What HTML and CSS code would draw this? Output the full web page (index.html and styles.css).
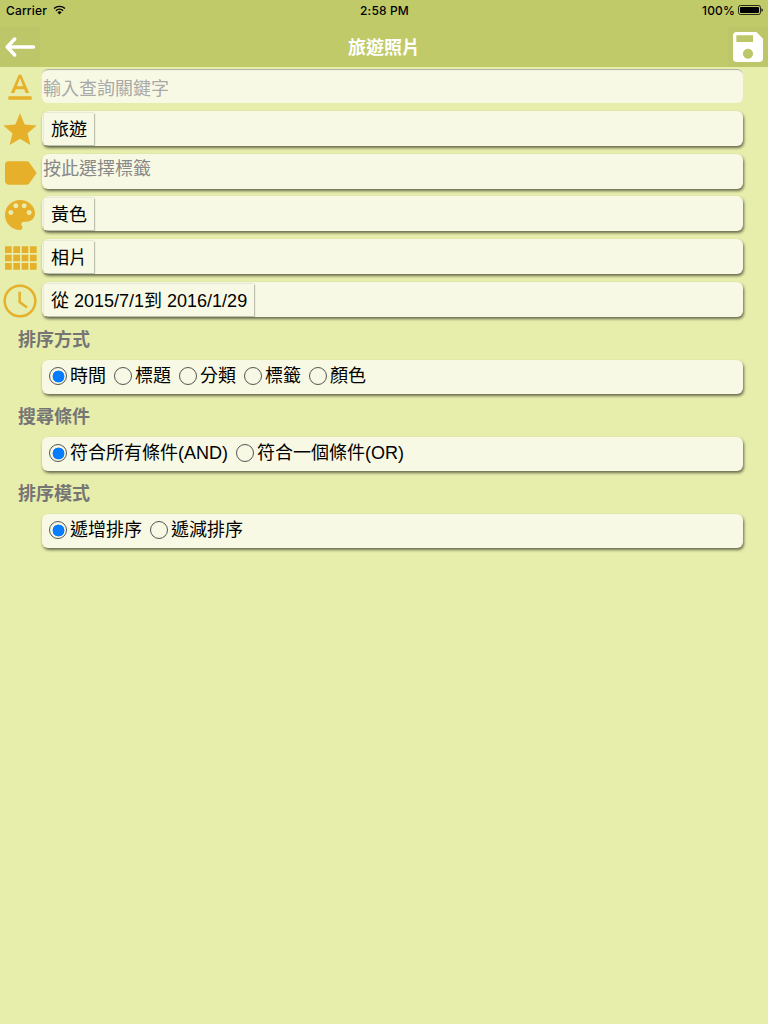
FILE: index.html
```
<!DOCTYPE html>
<html lang="zh-Hant">
<head>
  <meta charset="utf-8">
  <title>旅遊照片</title>
  <link rel="stylesheet" href="styles.css">
</head>
<body>
  <div class="status">
    <div class="status-left">
      <span>Carrier</span>
      <svg class="wifi" viewBox="0 0 13 10"><path d="M1 3.600a8 8 0 0 1 11 0M2.900 5.700a5.200 5.200 0 0 1 7.200 0" fill="none" stroke="#000" stroke-width="1.400"/><path d="M4.400 7.300a3 3 0 0 1 4.200 0L6.500 9.500z"/></svg>
    </div>
    <div class="status-time">2:58 PM</div>
    <div class="status-right">
      <span>100%</span>
      <svg class="battery" viewBox="0 0 25 10"><rect x=".5" y=".5" width="22" height="9" rx="2" fill="none" stroke="#000" stroke-width=".8"/><rect x="2" y="2" width="19" height="6" rx=".8"/><path d="M23.500 3.200q1.300.4 1.300 1.800t-1.300 1.800z"/></svg>
    </div>
  </div>
  <div class="header">
    <button class="head-btn">
      <svg viewBox="0 0 40 40"><path d="M33.500 20H8M14.700 12L7.200 20L14.700 28" fill="none" stroke="#fff" stroke-width="3.500" stroke-linecap="round" stroke-linejoin="round"/></svg>
    </button>
    <h1>旅遊照片</h1>
    <button class="head-btn">
      <svg viewBox="0 0 24 24"><path fill="#fff" d="M17 3H5c-1.110 0-2 .9-2 2v14c0 1.100.89 2 2 2h14c1.100 0 2-.9 2-2V7l-4-4zm-5 16c-1.660 0-3-1.340-3-3s1.340-3 3-3 3 1.340 3 3-1.340 3-3 3zm3-10H5V5h10v4z"/></svg>
    </button>
  </div>

  <div class="filters">
    <div class="row">
      <svg class="icon" viewBox="0 0 24 24"><path d="M5 17v2h14v-2H5zm4.500-4.200h5l.9 2.200h2.100L12.750 4h-1.500L6.500 15h2.100l.9-2.200zM12 5.980L13.870 11h-3.740L12 5.980z"/></svg>
      <input class="keyword" type="text" placeholder="輸入查詢關鍵字">
    </div>
    <div class="row">
      <svg class="icon" viewBox="0 0 24 24"><path d="M12 17.270L18.180 21l-1.640-7.030L22 9.240l-7.190-.61L12 2 9.190 8.630 2 9.240l5.460 4.730L5.820 21z"/></svg>
      <div class="box"><span class="tag">旅遊</span></div>
    </div>
    <div class="row">
      <svg class="icon" viewBox="0 0 24 24"><path d="M17.630 5.840C17.270 5.330 16.670 5 16 5L5 5.010C3.900 5.010 3 5.900 3 7v10c0 1.100.9 1.990 2 1.990L16 19c.67 0 1.270-.33 1.630-.84L22 12l-4.370-6.160z"/></svg>
      <div class="box"><span class="hint">按此選擇標籤</span></div>
    </div>
    <div class="row">
      <svg class="icon" viewBox="0 0 24 24"><path d="M12 3c-4.970 0-9 4.030-9 9s4.030 9 9 9c.83 0 1.500-.67 1.500-1.500 0-.39-.15-.74-.39-1.010-.23-.26-.38-.61-.38-.99 0-.83.67-1.500 1.500-1.500H16c2.760 0 5-2.240 5-5 0-4.420-4.030-8-9-8zm-5.500 9c-.83 0-1.500-.67-1.500-1.500S5.670 9 6.500 9 8 9.670 8 10.500 7.330 12 6.500 12zm3-4C8.670 8 8 7.330 8 6.500S8.670 5 9.500 5s1.500.67 1.500 1.500S10.330 8 9.500 8zm5 0c-.83 0-1.500-.67-1.500-1.500S13.670 5 14.500 5s1.500.67 1.500 1.500S15.330 8 14.500 8zm3 4c-.83 0-1.500-.67-1.500-1.500S16.670 9 17.500 9s1.500.67 1.500 1.500-.67 1.500-1.500 1.500z"/></svg>
      <div class="box"><span class="tag">黃色</span></div>
    </div>
    <div class="row">
      <svg class="icon" viewBox="0 0 24 24"><path d="M3 9h4V5H3v4zm0 5h4v-4H3v4zm5 0h4v-4H8v4zm5 0h4v-4h-4v4zM8 9h4V5H8v4zm5-4v4h4V5h-4zm5 9h4v-4h-4v4zM3 19h4v-4H3v4zm5 0h4v-4H8v4zm5 0h4v-4h-4v4zm5 0h4v-4h-4v4zm0-14v4h4V5h-4z"/></svg>
      <div class="box"><span class="tag">相片</span></div>
    </div>
    <div class="row">
      <svg class="icon clock" viewBox="0 0 24 24"><circle cx="12" cy="12" r="9.200"/><path d="M11.800 6.500V12.600L16.200 15.900"/></svg>
      <div class="box"><span class="tag">從 2015/7/1到 2016/1/29</span></div>
    </div>
  </div>

  <h2>排序方式</h2>
  <div class="box options">
    <label><input type="radio" name="sort" checked>時間</label>
    <label><input type="radio" name="sort">標題</label>
    <label><input type="radio" name="sort">分類</label>
    <label><input type="radio" name="sort">標籤</label>
    <label><input type="radio" name="sort">顏色</label>
  </div>
  <h2>搜尋條件</h2>
  <div class="box options">
    <label><input type="radio" name="match" checked>符合所有條件(AND)</label>
    <label><input type="radio" name="match">符合一個條件(OR)</label>
  </div>
  <h2>排序模式</h2>
  <div class="box options">
    <label><input type="radio" name="order" checked>遞增排序</label>
    <label><input type="radio" name="order">遞減排序</label>
  </div>
</body>
</html>
```
FILE: styles.css
```
* { box-sizing: border-box; }
body {
  margin: 0;
  min-height: 100vh;
  background: #e7edab;
  color: #000;
  font-family: "Liberation Sans", "Noto Sans CJK TC", sans-serif;
  font-size: 18px;
}
.status {
  display: grid;
  grid-template-columns: 1fr auto 1fr;
  align-items: center;
  height: 27px;
  padding: 0 5px 7px 6px;
  background: #c0ca69;
  font: 500 12px Inter, sans-serif;
  letter-spacing: 0.15px;
}
.status-left, .status-right {
  display: flex;
  align-items: center;
}
.status-left { gap: 6px; }
.status-right { justify-content: flex-end; gap: 3px; }
.wifi { width: 13px; height: 10px; }
.battery { width: 25px; height: 10px; }
.header {
  display: flex;
  align-items: center;
  justify-content: space-between;
  height: 40px;
  background: #c0ca69;
}
.header h1 {
  margin: 0 0 2px;
  color: #fff;
  font-size: 18px;
  font-weight: bold;
}
.head-btn {
  width: 40px;
  height: 40px;
  padding: 0;
  border: 0;
  background: #bdc668;
}
.head-btn svg { display: block; width: 40px; height: 40px; }
.filters {
  display: flex;
  flex-direction: column;
  gap: 2.8px;
  padding-top: 1px;
}
.row {
  display: flex;
  height: 40px;
  padding-right: 25px;
}
.icon {
  flex: none;
  width: 40px;
  height: 40px;
  margin: -1px 2px 0 0;
  fill: #e6b02a;
}
.row:first-child .icon { margin-top: 0; }
.clock {
  fill: none;
  stroke: #e6b02a;
  stroke-width: 1.5;
}
.box, .keyword {
  flex: 1;
  height: 35px;
  border-radius: 6px;
  background: #f7f9e4;
}
.box {
  display: flex;
  align-items: flex-start;
  box-shadow: 1px 2px 3px rgba(0, 0, 0, 0.55);
}
.keyword {
  height: 34px;
  margin-top: 1px;
  padding: 6px 1px 0;
  border: 0;
  box-shadow: inset 0 2px 1px -1px rgba(0, 0, 0, 0.3);
  font: inherit;
}
.keyword::placeholder { color: #a9a9a9; }
.tag {
  height: 32px;
  margin: 2px 0 0 2px;
  padding: 0 7px;
  line-height: 34px;
  box-shadow: 0 0 2px rgba(0, 0, 0, 0.2), 1px 1px 1px rgba(0, 0, 0, 0.18);
}
.hint {
  padding-left: 1px;
  color: #888;
  line-height: 31px;
}
h2 {
  height: 43px;
  margin: 0;
  padding-left: 18px;
  color: #757575;
  font-size: 18px;
  line-height: 46px;
}
.filters + h2 { margin-top: -5px; }
.options {
  height: 34px;
  margin: 0 25px 0 42px;
  padding-left: 7px;
  gap: 8px;
}
.options label {
  display: flex;
  align-items: center;
  height: 33px;
  line-height: 33px;
}
.options input {
  appearance: none;
  width: 18px;
  height: 18px;
  margin: 0 3px 0 0;
  border: 1px solid #555;
  border-radius: 50%;
}
.options input:checked {
  background: radial-gradient(circle at 8.5px 8.5px, #087cff 5.7px, transparent 6.2px);
}
```
